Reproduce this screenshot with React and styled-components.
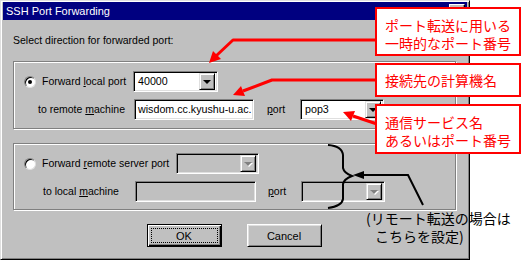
import React from 'react';
import styled, { createGlobalStyle, css } from 'styled-components';

const GlobalStyle = createGlobalStyle`
  html, body {
    margin: 0;
    padding: 0;
    background: #fff;
  }
  body {
    font-family: "Liberation Sans", Arial, sans-serif;
  }
`;

const Stage = styled.div`
  position: relative;
  width: 522px;
  height: 262px;
  overflow: hidden;
  background: #fff;
`;

const Window = styled.div`
  box-sizing: border-box;
  width: 470px;
  height: 260px;
  background: #c0c0c0;
  border-top: 1px solid #dfdfdf;
  border-left: 1px solid #dfdfdf;
  border-right: 1px solid #000;
  border-bottom: 1px solid #000;
  box-shadow: inset 1px 1px 0 #fff, inset -1px -1px 0 #808080;
  padding: 1px 2px 2px 2px;
  display: flex;
  flex-direction: column;
`;

const TitleBar = styled.div`
  height: 18px;
  background: #000080;
  color: #fff;
  font-size: 11px;
  display: flex;
  align-items: center;
  justify-content: space-between;
  padding: 0 2px 0 3px;
`;

const CloseButton = styled.div`
  box-sizing: border-box;
  width: 16px;
  height: 14px;
  background: #c0c0c0;
  border-top: 1px solid #fff;
  border-left: 1px solid #fff;
  border-right: 1px solid #000;
  border-bottom: 1px solid #000;
  box-shadow: inset -1px -1px 0 #808080;
  color: #000;
  font-size: 11px;
  line-height: 11px;
  text-align: center;
  font-weight: bold;
`;

const Client = styled.div`
  flex: 1;
  display: flex;
  flex-direction: column;
  padding: 14px 10px 0 10px;
  font-size: 10.5px;
  color: #000;
`;

const Heading = styled.div`
  height: 13px;
  line-height: 13px;
`;

const Group = styled.div`
  box-sizing: border-box;
  margin-top: 14px;
  width: 443px;
  height: ${p => p.$h}px;
  border: 1px solid #808080;
  box-shadow: inset 1px 1px 0 #fff, 1px 1px 0 #fff;
  padding: 9px 0 0 10px;
  display: flex;
  flex-direction: column;
  gap: 7px;
`;

const Row = styled.div`
  display: flex;
  align-items: center;
  height: 21px;
`;

const Label = styled.div`
  box-sizing: border-box;
  width: ${p => p.$w}px;
  padding-left: ${p => p.$indent || 0}px;
  white-space: nowrap;
  line-height: 13px;
`;

const Radio = styled.div`
  box-sizing: border-box;
  position: relative;
  width: 12px;
  height: 12px;
  border-radius: 50%;
  background: #fff;
  border: 1px solid;
  border-color: #808080 #dfdfdf #dfdfdf #808080;
  box-shadow: inset 1px 1px 0 #000;
  margin-right: 6px;
  flex-shrink: 0;
  ${p => p.$checked && css`
    &::after {
      content: '';
      position: absolute;
      left: 3px;
      top: 3px;
      width: 4px;
      height: 4px;
      border-radius: 50%;
      background: #000;
    }
  `}
`;

const sunken = css`
  box-sizing: border-box;
  height: 21px;
  border-top: 1px solid #808080;
  border-left: 1px solid #808080;
  border-right: 1px solid #fff;
  border-bottom: 1px solid #fff;
  box-shadow: inset 1px 1px 0 #000, inset -1px -1px 0 #dfdfdf;
  background: ${p => (p.$disabled ? '#c0c0c0' : '#fff')};
`;

const Field = styled.div`
  ${sunken}
  width: ${p => p.$w}px;
  margin-left: ${p => p.$ml || 0}px;
  padding-left: 3px;
  line-height: 19px;
  font-size: 10.7px;
  overflow: hidden;
  white-space: nowrap;
`;

const Combo = styled.div`
  ${sunken}
  width: ${p => p.$w}px;
  margin-left: ${p => p.$ml || 0}px;
  display: flex;
  align-items: center;
  padding: 2px;
  font-size: 10.7px;
`;

const ComboText = styled.div`
  flex: 1;
  padding-left: 2px;
  line-height: 17px;
  overflow: hidden;
`;

const DropButton = styled.div`
  box-sizing: border-box;
  width: 16px;
  height: 17px;
  background: #c0c0c0;
  border-top: 1px solid #dfdfdf;
  border-left: 1px solid #dfdfdf;
  border-right: 1px solid #000;
  border-bottom: 1px solid #000;
  box-shadow: inset 1px 1px 0 #fff, inset -1px -1px 0 #808080;
  display: flex;
  align-items: center;
  justify-content: center;
  &::after {
    content: '';
    width: 0;
    height: 0;
    border-left: 4px solid transparent;
    border-right: 4px solid transparent;
    border-top: 4px solid ${p => (p.$disabled ? '#808080' : '#000')};
    ${p => p.$disabled && css`filter: drop-shadow(1px 1px 0 #fff);`}
  }
`;

const Buttons = styled.div`
  margin-top: 14px;
  display: flex;
  justify-content: center;
  gap: 25px;
  padding-right: 2px;
`;

const Button = styled.div`
  box-sizing: border-box;
  position: relative;
  width: 75px;
  height: 23px;
  background: #c0c0c0;
  display: flex;
  align-items: center;
  justify-content: center;
  font-size: 11px;
  ${p => p.$default
    ? css`
      border: 1px solid #000;
      box-shadow: inset 1px 1px 0 #fff, inset -1px -1px 0 #000, inset -2px -2px 0 #808080;
      &::before {
        content: '';
        position: absolute;
        inset: 3px;
        border: 1px dotted #000;
      }
    `
    : css`
      border-top: 1px solid #fff;
      border-left: 1px solid #fff;
      border-right: 1px solid #000;
      border-bottom: 1px solid #000;
      box-shadow: inset 1px 1px 0 #dfdfdf, inset -1px -1px 0 #808080;
    `}
`;

const Callout = styled.div`
  position: absolute;
  box-sizing: border-box;
  left: 375px;
  top: ${p => p.$top}px;
  width: 146px;
  height: ${p => p.$h}px;
  border: 2px solid #ff0000;
  background: #fff;
  color: #ff0000;
  font-family: "Noto Sans CJK JP", sans-serif;
  font-size: 14px;
  line-height: 18px;
  padding: ${p => p.$pt}px 0 0 8px;
  white-space: nowrap;
`;

const Note = styled.div`
  position: absolute;
  left: 366px;
  top: 209px;
  color: #000;
  font-family: "Noto Sans CJK JP", sans-serif;
  font-size: 14px;
  line-height: 18px;
  white-space: nowrap;
`;

const NoteLine = styled.div`
  padding-left: ${p => p.$indent || 0}px;
`;

const Marks = styled.svg`
  position: absolute;
  left: 0;
  top: 0;
  pointer-events: none;
`;

const U = styled.span`
  text-decoration: underline;
`;

export default function App() {
  return (
    <>
      <GlobalStyle />
      <Stage>
        <Window>
          <TitleBar>
            <span>SSH Port Forwarding</span>
            <CloseButton>×</CloseButton>
          </TitleBar>
          <Client>
            <Heading>Select direction for forwarded port:</Heading>

            <Group $h={68}>
              <Row>
                <Radio $checked />
                <Label $w={91}>Forward <U>l</U>ocal port</Label>
                <Combo $w={85}>
                  <ComboText>40000</ComboText>
                  <DropButton />
                </Combo>
              </Row>
              <Row>
                <Label $w={110} $indent={14}>to remote <U>m</U>achine</Label>
                <Field $w={120}>wisdom.cc.kyushu-u.ac.</Field>
                <Label $w={34} $indent={13}><U>p</U>ort</Label>
                <Combo $w={84} $ml={12}>
                  <ComboText>pop3</ComboText>
                  <DropButton />
                </Combo>
              </Row>
            </Group>

            <Group $h={67}>
              <Row>
                <Radio />
                <Label $w={134}>Forward <U>r</U>emote server port</Label>
                <Combo $w={83} $disabled>
                  <ComboText />
                  <DropButton $disabled />
                </Combo>
              </Row>
              <Row>
                <Label $w={111} $indent={19}>to local <U>m</U>achine</Label>
                <Field $w={121} $disabled />
                <Label $w={35} $indent={12}><U>p</U>ort</Label>
                <Combo $w={84} $ml={10} $disabled>
                  <ComboText />
                  <DropButton $disabled />
                </Combo>
              </Row>
            </Group>

            <Buttons>
              <Button $default>OK</Button>
              <Button>Cancel</Button>
            </Buttons>
          </Client>
        </Window>

        <Marks width="522" height="262" viewBox="0 0 522 262">
          <g stroke="#ff0000" strokeWidth="3" fill="none" strokeLinejoin="round">
            <polyline points="376,40 233,40 216,56" />
            <polyline points="376,80 272,80 243,91" />
            <polyline points="377,124 353,116" />
          </g>
          <g fill="#ff0000">
            <polygon points="209,63 221,59 213,51" />
            <polygon points="233,95 245,96 241,86" />
            <polygon points="343,112 355,111 351,121" />
          </g>
          <g stroke="#000" strokeWidth="2" fill="none">
            <path d="M328 145 Q342 146 343 155 L343 168 Q344 173 352 176 Q344 179 343 184 L343 199 Q342 206 328 208" />
            <polyline points="362,175 408,175 423,205" />
          </g>
          <polygon points="353,175 364,171 364,179" fill="#000" />
        </Marks>

        <Callout $top={7} $h={49} $pt={7}>
          ポート転送に用いる<br />一時的なポート番号
        </Callout>
        <Callout $top={63} $h={34} $pt={6}>
          接続先の計算機名
        </Callout>
        <Callout $top={104} $h={50} $pt={7}>
          通信サービス名<br />あるいはポート番号
        </Callout>

        <Note>
          <NoteLine>(リモート転送の場合は</NoteLine>
          <NoteLine $indent={9}>こちらを設定)</NoteLine>
        </Note>
      </Stage>
    </>
  );
}
